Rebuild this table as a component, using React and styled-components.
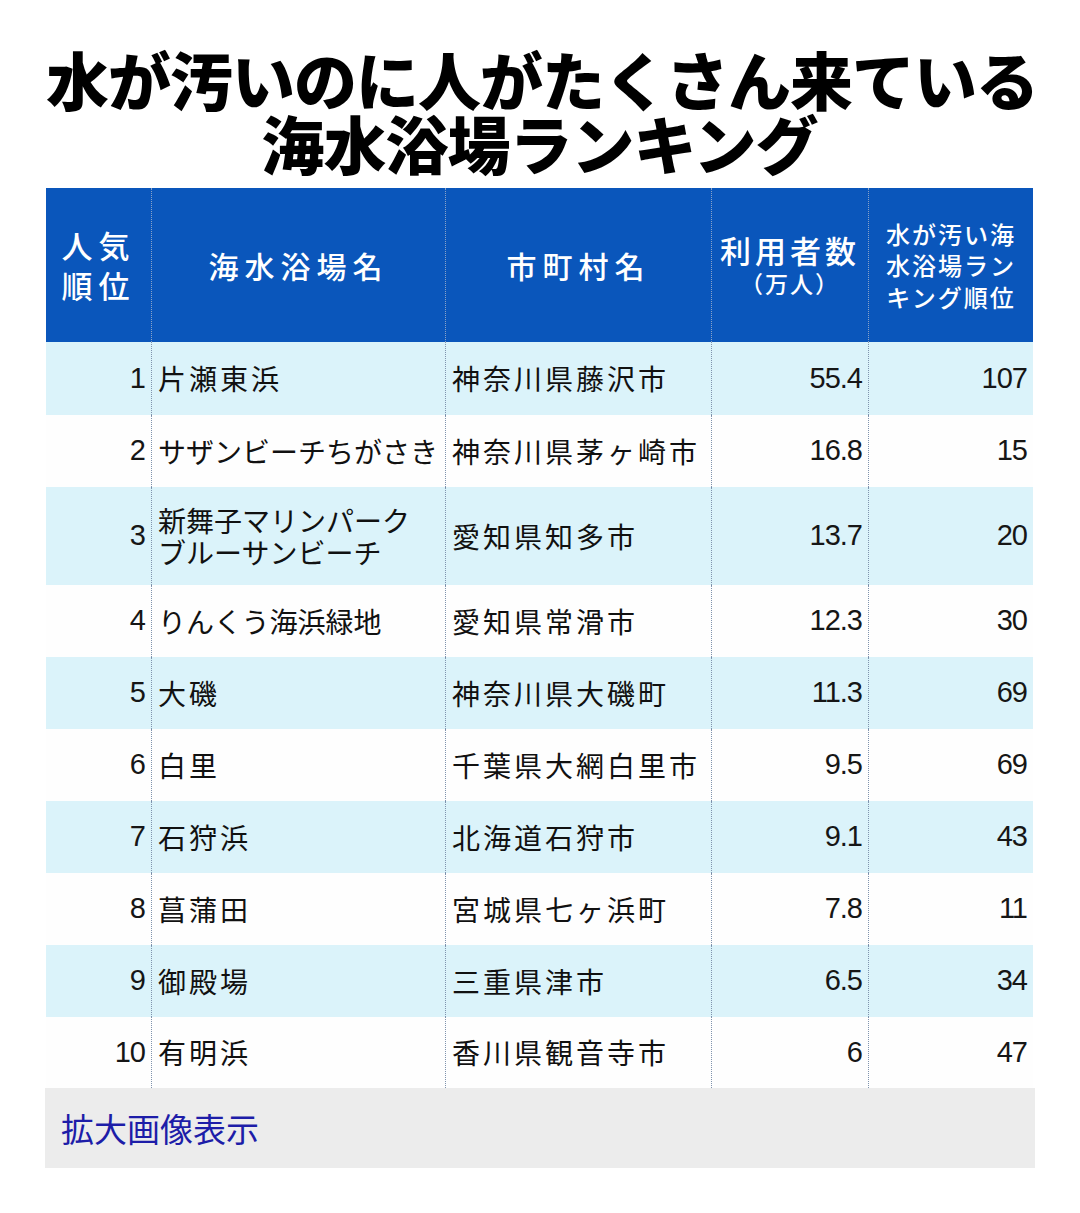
import React from 'react';
import styled, { createGlobalStyle } from 'styled-components';

const GlobalStyle = createGlobalStyle`
  body {
    margin: 0;
    background: #fff;
    font-family: "Noto Sans CJK JP", "Noto Sans", sans-serif;
  }
`;

const Page = styled.div`
  width: 1080px;
  padding: 46px 0 0 46px;
  box-sizing: border-box;
`;

const Title = styled.h1`
  margin: 0;
  width: 987px;
  text-align: center;
  font-family: "Noto Sans CJK JP", sans-serif;
  font-weight: 900;
  font-size: 63px;
  line-height: 64px;
  letter-spacing: -1px;
  color: #000;
  padding-bottom: 14px;
  white-space: nowrap;
`;

const Table = styled.div`
  width: 987px;
  display: grid;
  grid-template-columns: 105px 294px 266px 157px 165px;
`;

const HeadCell = styled.div`
  background: #0a56bb;
  color: #fff;
  height: 154px;
  display: flex;
  flex-direction: column;
  align-items: center;
  justify-content: center;
  text-align: center;
  font-weight: 500;
  font-size: ${p => p.size || 30}px;
  line-height: ${p => p.lh || 1.3};
  letter-spacing: ${p => p.ls || 4}px;
  border-left: ${p => (p.first ? 'none' : '1px dotted #8aa3c8')};
  box-sizing: border-box;
`;

const Sub = styled.span`
  font-size: 23px;
  letter-spacing: 2px;
  line-height: 1.3;
`;

const Cell = styled.div`
  background: ${p => (p.alt ? '#dbf3fa' : '#fefefe')};
  height: ${p => p.h}px;
  display: flex;
  align-items: center;
  justify-content: ${p => (p.right ? 'flex-end' : 'flex-start')};
  padding: 0 ${p => (p.right ? 6 : 0)}px 0 ${p => (p.right ? 0 : 6)}px;
  border-left: ${p => (p.first ? 'none' : '1px dotted #7f93ad')};
  box-sizing: border-box;
  color: #111;
  font-size: 28px;
  line-height: 1.15;
  letter-spacing: 3px;
  white-space: nowrap;
`;

const Name = styled.span`
  white-space: pre-line;
  letter-spacing: ${p => p.ls}px;
`;

const Num = styled.span`
  font-family: "Liberation Sans", Arial, sans-serif;
  font-size: 29px;
  letter-spacing: -1px;
  color: #161616;
`;

const Footer = styled.div`
  width: 990px;
  margin-left: -1px;
  height: 80px;
  background: #ececec;
  display: flex;
  align-items: center;
  padding-left: 16px;
  box-sizing: border-box;
  color: #1d1da8;
  font-size: 33px;
`;

const rows = [
  ['1', '片瀬東浜', 3, '神奈川県藤沢市', '55.4', '107', 73],
  ['2', 'サザンビーチちがさき', 0, '神奈川県茅ヶ崎市', '16.8', '15', 72],
  ['3', '新舞子マリンパーク\nブルーサンビーチ', 0, '愛知県知多市', '13.7', '20', 98],
  ['4', 'りんくう海浜緑地', 0, '愛知県常滑市', '12.3', '30', 72],
  ['5', '大磯', 3, '神奈川県大磯町', '11.3', '69', 72],
  ['6', '白里', 3, '千葉県大網白里市', '9.5', '69', 72],
  ['7', '石狩浜', 3, '北海道石狩市', '9.1', '43', 72],
  ['8', '菖蒲田', 3, '宮城県七ヶ浜町', '7.8', '11', 72],
  ['9', '御殿場', 3, '三重県津市', '6.5', '34', 72],
  ['10', '有明浜', 3, '香川県観音寺市', '6', '47', 71],
];

export default function App() {
  return (
    <Page>
      <GlobalStyle />
      <Title>
        水が汚いのに人がたくさん来ている
        <br />
        海水浴場ランキング
      </Title>
      <Table>
        <HeadCell first size={31} ls={6}>
          <span>人気</span>
          <span>順位</span>
        </HeadCell>
        <HeadCell size={30} ls={6}>海水浴場名</HeadCell>
        <HeadCell size={30} ls={6}>市町村名</HeadCell>
        <HeadCell size={31} ls={4} lh={1.25}>
          <span>利用者数</span>
          <Sub>（万人）</Sub>
        </HeadCell>
        <HeadCell size={24} ls={2} lh={1.3}>
          <span>水が汚い海</span>
          <span>水浴場ラン</span>
          <span>キング順位</span>
        </HeadCell>
        {rows.map(([rank, name, ls, city, users, dirty, h], i) => {
          const alt = i % 2 === 0;
          return (
            <React.Fragment key={rank}>
              <Cell first right alt={alt} h={h}>
                <Num>{rank}</Num>
              </Cell>
              <Cell alt={alt} h={h}>
                <Name ls={ls}>{name}</Name>
              </Cell>
              <Cell alt={alt} h={h}>{city}</Cell>
              <Cell right alt={alt} h={h}>
                <Num>{users}</Num>
              </Cell>
              <Cell right alt={alt} h={h}>
                <Num>{dirty}</Num>
              </Cell>
            </React.Fragment>
          );
        })}
      </Table>
      <Footer>拡大画像表示</Footer>
    </Page>
  );
}
